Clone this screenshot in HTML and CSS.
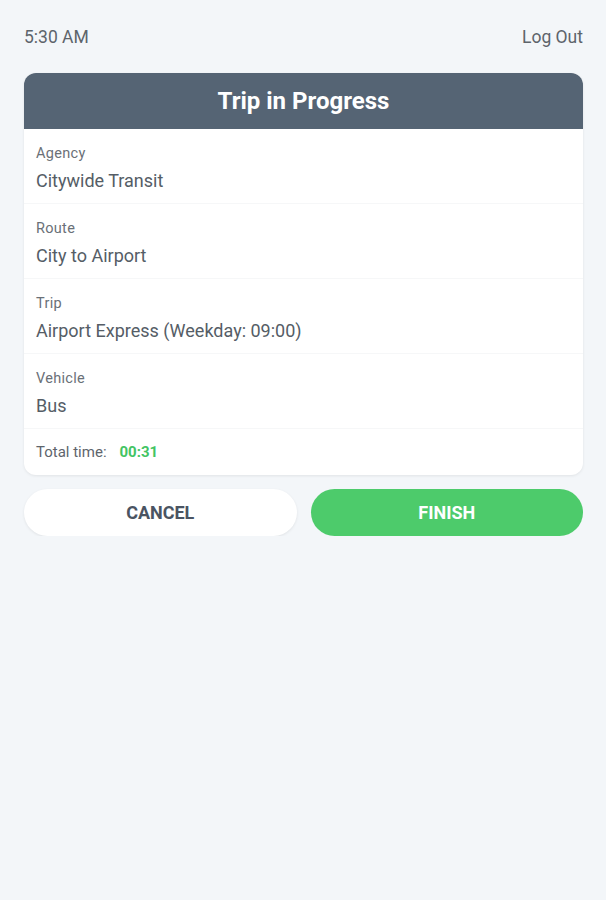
FILE: index.html
```html
<!DOCTYPE html>
<html lang="en">
<head>
    <meta charset="UTF-8">
    <meta name="viewport" content="width=device-width, initial-scale=1.0">
    <title>Trip in Progress</title>
    <link rel="stylesheet" href="styles.css">
</head>
<body>
    <div class="top-bar">
        <span class="clock">5:30 AM</span>
        <span class="logout">Log Out</span>
    </div>

    <div class="trip-card">
        <div class="trip-header">Trip in Progress</div>
        <div class="trip-row">
            <div class="row-label">Agency</div>
            <div class="row-value">Citywide Transit</div>
        </div>
        <div class="trip-row">
            <div class="row-label">Route</div>
            <div class="row-value">City to Airport</div>
        </div>
        <div class="trip-row">
            <div class="row-label">Trip</div>
            <div class="row-value">Airport Express (Weekday: 09:00)</div>
        </div>
        <div class="trip-row">
            <div class="row-label">Vehicle</div>
            <div class="row-value">Bus</div>
        </div>
        <div class="total-row">
            <span class="total-label">Total time:</span>
            <span class="total-value">00:31</span>
        </div>
    </div>

    <div class="actions">
        <button type="button" class="btn btn-cancel">CANCEL</button>
        <button type="button" class="btn btn-finish">FINISH</button>
    </div>
</body>
</html>
```

FILE: styles.css
```css
body {
    font-family: Roboto, "Liberation Sans", sans-serif;
    margin: 0;
    padding: 0 23px 0 24px;
    background-color: #f3f6f9;
    color: #555e68;
}
.top-bar {
    display: flex;
    justify-content: space-between;
    align-items: center;
    height: 24px;
    margin-top: 25px;
    font-size: 17.5px;
    color: #5d646b;
}
.trip-card {
    margin-top: 24px;
    background-color: #ffffff;
    border-radius: 12px;
    overflow: hidden;
    box-shadow: 0 1px 3px rgba(0, 0, 0, 0.08);
}
.trip-header {
    height: 56px;
    line-height: 56px;
    text-align: center;
    background-color: #556474;
    color: #ffffff;
    font-size: 24px;
    font-weight: bold;
}
.trip-row {
    padding: 16px 12px 11px;
    border-bottom: 1px solid #f6f7f8;
}
.trip-row:last-of-type {
    border-bottom: 1px solid #eceef0;
}
.row-label {
    font-size: 14.5px;
    line-height: 18px;
    letter-spacing: 0.3px;
    color: #6a7077;
}
.row-value {
    margin-top: 7px;
    font-size: 18px;
    line-height: 22px;
    color: #555d66;
}
.total-row {
    height: 46px;
    display: flex;
    align-items: center;
    padding: 0 12px;
    font-size: 15px;
}
.total-label {
    color: #5e656c;
    margin-right: 13px;
}
.total-value {
    color: #43c463;
    font-weight: bold;
}
.actions {
    display: flex;
    gap: 14px;
    margin-top: 14px;
}
.btn {
    flex: 1;
    height: 47px;
    border: none;
    border-radius: 24px;
    font-family: Roboto, "Liberation Sans", sans-serif;
    font-size: 18px;
    font-weight: bold;
    cursor: pointer;
}
.btn-cancel {
    background-color: #ffffff;
    color: #4a5462;
    box-shadow: 0 1px 3px rgba(0, 0, 0, 0.08);
}
.btn-finish {
    background-color: #4dcb6b;
    color: #ffffff;
}
```
